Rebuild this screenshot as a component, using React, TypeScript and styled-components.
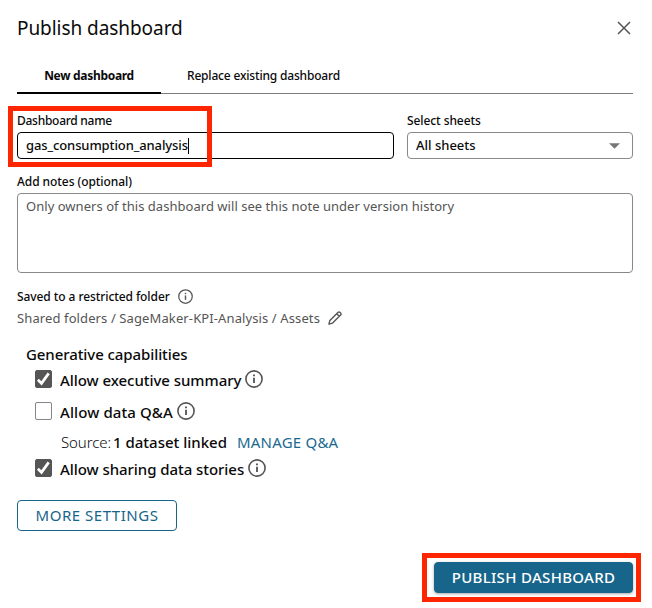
import React from 'react';
import styled, { createGlobalStyle } from 'styled-components';

const GlobalStyle = createGlobalStyle`
  * { box-sizing: border-box; }
  body { margin: 0; background: #fff; font-family: "Noto Sans", "Open Sans", sans-serif; color: #0a0a0a; }
  button { font-family: inherit; cursor: pointer; }
`;

const Dialog = styled.main`
  width: 652px;
  height: 608px;
  padding: 0 19px 0 17px;
  overflow: hidden;
  display: flex;
  flex-direction: column;
  background: #fff;
  white-space: nowrap;
`;

const Header = styled.header`
  height: 55px;
  flex: none;
  display: flex;
  align-items: center;
  justify-content: space-between;
`;

const Title = styled.h1`
  margin: 0;
  padding-top: 2px;
  font-size: 19px;
  font-weight: 400;
  line-height: 27px;
  letter-spacing: -0.06px;
`;

const CloseButton = styled.button`
  display: flex;
  padding: 0;
  margin-right: 2px;
  border: 0;
  background: none;
  color: #555;
`;

const Tabs = styled.nav`
  height: 39px;
  flex: none;
  display: flex;
  padding-top: 5px;
  box-shadow: inset 0 -1px #7d7d7d;
`;

const Tab = styled.button<{ $active?: boolean }>`
  height: 34px;
  padding: 0 26px;
  border: 0;
  border-bottom: 2px solid ${p => (p.$active ? '#000' : 'transparent')};
  background: none;
  color: #0a0a0a;
  font-size: 12px;
  line-height: 32px;
  font-weight: ${p => (p.$active ? 700 : 500)};
  letter-spacing: ${p => (p.$active ? '-0.3px' : '-0.18px')};
  ${p => p.$active && 'width: 144px;'}
`;

const FieldRow = styled.div`
  display: grid;
  grid-template-columns: 377px 226px;
  column-gap: 13px;
  margin-top: 17px;
`;

const Field = styled.div`
  position: relative;
  display: flex;
  flex-direction: column;
  gap: 2px;
`;

const NotesField = styled(Field)`
  margin-top: 13px;
`;

const Label = styled.label<{ $spacing?: number }>`
  font-size: 12px;
  font-weight: 500;
  line-height: 19px;
  letter-spacing: ${p => p.$spacing ?? 0}px;
`;

const NameInput = styled.div`
  height: 27px;
  display: flex;
  align-items: center;
  padding-left: 8px;
  border: 1px solid #000;
  border-radius: 4px;
  font-size: 13px;
  font-weight: 500;
  line-height: 25px;
  letter-spacing: -0.11px;
`;

const TextCursor = styled.span`
  width: 1px;
  height: 16px;
  background: #000;
`;

const SelectBox = styled.div`
  height: 27px;
  display: flex;
  align-items: center;
  justify-content: space-between;
  padding: 0 12px 0 8px;
  border: 1px solid #888;
  border-radius: 4px;
  font-size: 13px;
  font-weight: 500;
  line-height: 25px;
`;

const NotesArea = styled.div`
  height: 80px;
  padding: 2px 8px;
  border: 1px solid #888;
  border-radius: 4px;
  color: #555;
  font-size: 13px;
  line-height: 20px;
  letter-spacing: 0.035px;
`;

const Highlight = styled.div<{ $top: number; $left: number; $width: number; $height: number }>`
  position: absolute;
  top: ${p => p.$top}px;
  left: ${p => p.$left}px;
  width: ${p => p.$width}px;
  height: ${p => p.$height}px;
  border: 5px solid #fd2600;
  pointer-events: none;
`;

const FolderStatus = styled.div`
  height: 21px;
  margin-top: 13px;
  display: flex;
  align-items: center;
  gap: 8px;
`;

const FolderPath = styled.div`
  height: 22px;
  display: flex;
  align-items: center;
  gap: 8px;
  color: #555;
  font-size: 13px;
  letter-spacing: 0.11px;
`;

const Capabilities = styled.section`
  margin-top: 13px;
  padding-left: 9px;
  font-size: 15px;
  font-weight: 500;
`;

const SectionTitle = styled.h2`
  margin: 0;
  font-size: 15px;
  font-weight: 500;
  line-height: 24px;
  letter-spacing: -0.08px;
`;

const Option = styled.div<{ $gap?: number }>`
  height: 26px;
  margin-top: ${p => p.$gap ?? 0}px;
  padding-left: 9px;
  display: flex;
  align-items: center;
`;

const OptionLabel = styled.span<{ $spacing?: number }>`
  padding-top: 2px;
  margin: 0 4px 0 8px;
  line-height: 24px;
  letter-spacing: ${p => p.$spacing ?? 0}px;
`;

const CheckSquare = styled.span<{ $checked?: boolean }>`
  width: 17px;
  height: 18px;
  display: flex;
  align-items: center;
  justify-content: center;
  border: 1px solid ${p => (p.$checked ? '#555' : '#858585')};
  border-radius: 2px;
  background: ${p => (p.$checked ? '#555' : '#fff')};
`;

const SourceRow = styled.div`
  height: 24px;
  margin-top: 6px;
  padding-left: 35px;
  display: flex;
  align-items: center;
  line-height: 24px;
`;

const SourceLabel = styled.span`
  width: 52px;
  font-weight: 300;
  letter-spacing: -0.1px;
`;

const ManageLink = styled.a`
  margin-left: 10px;
  color: #1a6a90;
  font-weight: 400;
  letter-spacing: 0.2px;
`;

const ActionButton = styled.button<{ $primary?: boolean }>`
  width: ${p => (p.$primary ? 199 : 160)}px;
  height: 31px;
  padding: 0;
  border: 1px solid #17658a;
  border-radius: 4px;
  background: ${p => (p.$primary ? '#17658a' : '#fff')};
  color: ${p => (p.$primary ? '#fff' : '#17658a')};
  font-size: 15px;
  line-height: 29px;
  font-weight: ${p => (p.$primary ? 500 : 400)};
  letter-spacing: ${p => (p.$primary ? 0.32 : 0.52)}px;
  box-shadow: ${p => (p.$primary ? '0 1px 3px rgba(0, 0, 0, 0.35)' : 'none')};
`;

const MoreRow = styled.div`
  margin-top: 19px;
  height: 31px;
`;

const Footer = styled.footer`
  position: relative;
  align-self: flex-end;
  margin-top: 31px;
  height: 31px;
`;

function InfoIcon({ size, stroke }: { size: number; stroke: number }) {
  return (
    <svg width={size} height={size} viewBox="0 0 18 18" fill="none" stroke="#555" strokeWidth={stroke}>
      <circle cx="9" cy="9" r="8.1" />
      <path d="M9 7.7V13" strokeWidth={stroke * 1.15} />
      <path d="M9 4.6V6.2" strokeWidth={stroke * 1.2} />
    </svg>
  );
}

function Checkbox({ checked }: { checked?: boolean }) {
  return (
    <CheckSquare $checked={checked} role="checkbox" aria-checked={!!checked}>
      {checked && (
        <svg width="15" height="16" viewBox="0 0 15 16" fill="none" stroke="#fff" strokeWidth="2.7">
          <path d="M1.9 8.8L5.5 12.4L12.7 2.4" />
        </svg>
      )}
    </CheckSquare>
  );
}

export default function App() {
  return (
    <>
      <GlobalStyle />
      <Dialog>
        <Header>
          <Title>Publish dashboard</Title>
          <CloseButton aria-label="Close">
            <svg width="14" height="14" viewBox="0 0 14 14" fill="none" stroke="currentColor" strokeWidth="1.5">
              <path d="M1 1L13 13M13 1L1 13" />
            </svg>
          </CloseButton>
        </Header>

        <Tabs>
          <Tab $active>New dashboard</Tab>
          <Tab>Replace existing dashboard</Tab>
        </Tabs>

        <FieldRow>
          <Field>
            <Label $spacing={-0.27}>Dashboard name</Label>
            <NameInput>
              gas_consumption_analysis
              <TextCursor />
            </NameInput>
            <Highlight $top={-5} $left={-9} $width={204} $height={61} />
          </Field>
          <Field>
            <Label $spacing={-0.08}>Select sheets</Label>
            <SelectBox>
              All sheets
              <svg width="11" height="6" viewBox="0 0 11 6">
                <path d="M0 0.2H11L5.5 5.8Z" fill="#777" />
              </svg>
            </SelectBox>
          </Field>
        </FieldRow>

        <NotesField>
          <Label $spacing={-0.07}>Add notes (optional)</Label>
          <NotesArea>Only owners of this dashboard will see this note under version history</NotesArea>
        </NotesField>

        <FolderStatus>
          <Label $spacing={-0.08}>Saved to a restricted folder</Label>
          <InfoIcon size={15} stroke={1.5} />
        </FolderStatus>
        <FolderPath>
          Shared folders / SageMaker-KPI-Analysis / Assets
          <svg width="14" height="14" viewBox="0 0 14 14" fill="none" stroke="#555" strokeWidth="1.4" strokeLinejoin="round">
            <path d="M0.9 13.1L1.9 9.4L9.9 1.4Q10.9 0.5 11.9 1.3L12.7 2.1Q13.5 3.1 12.6 4.1L4.6 12.1ZM8.7 2.7L11.3 5.3" />
          </svg>
        </FolderPath>

        <Capabilities>
          <SectionTitle>Generative capabilities</SectionTitle>
          <Option>
            <Checkbox checked />
            <OptionLabel $spacing={-0.05}>Allow executive summary</OptionLabel>
            <InfoIcon size={18} stroke={1.6} />
          </Option>
          <Option $gap={6}>
            <Checkbox />
            <OptionLabel $spacing={0.1}>Allow data Q&amp;A</OptionLabel>
            <InfoIcon size={18} stroke={1.6} />
          </Option>
          <SourceRow>
            <SourceLabel>Source:</SourceLabel>
            <span>1 dataset linked</span>
            <ManageLink>MANAGE Q&amp;A</ManageLink>
          </SourceRow>
          <Option $gap={1}>
            <Checkbox checked />
            <OptionLabel $spacing={-0.06}>Allow sharing data stories</OptionLabel>
            <InfoIcon size={18} stroke={1.6} />
          </Option>
        </Capabilities>

        <MoreRow>
          <ActionButton>MORE SETTINGS</ActionButton>
        </MoreRow>

        <Footer>
          <ActionButton $primary>PUBLISH DASHBOARD</ActionButton>
          <Highlight $top={-9} $left={-12} $width={219} $height={49} />
        </Footer>
      </Dialog>
    </>
  );
}
